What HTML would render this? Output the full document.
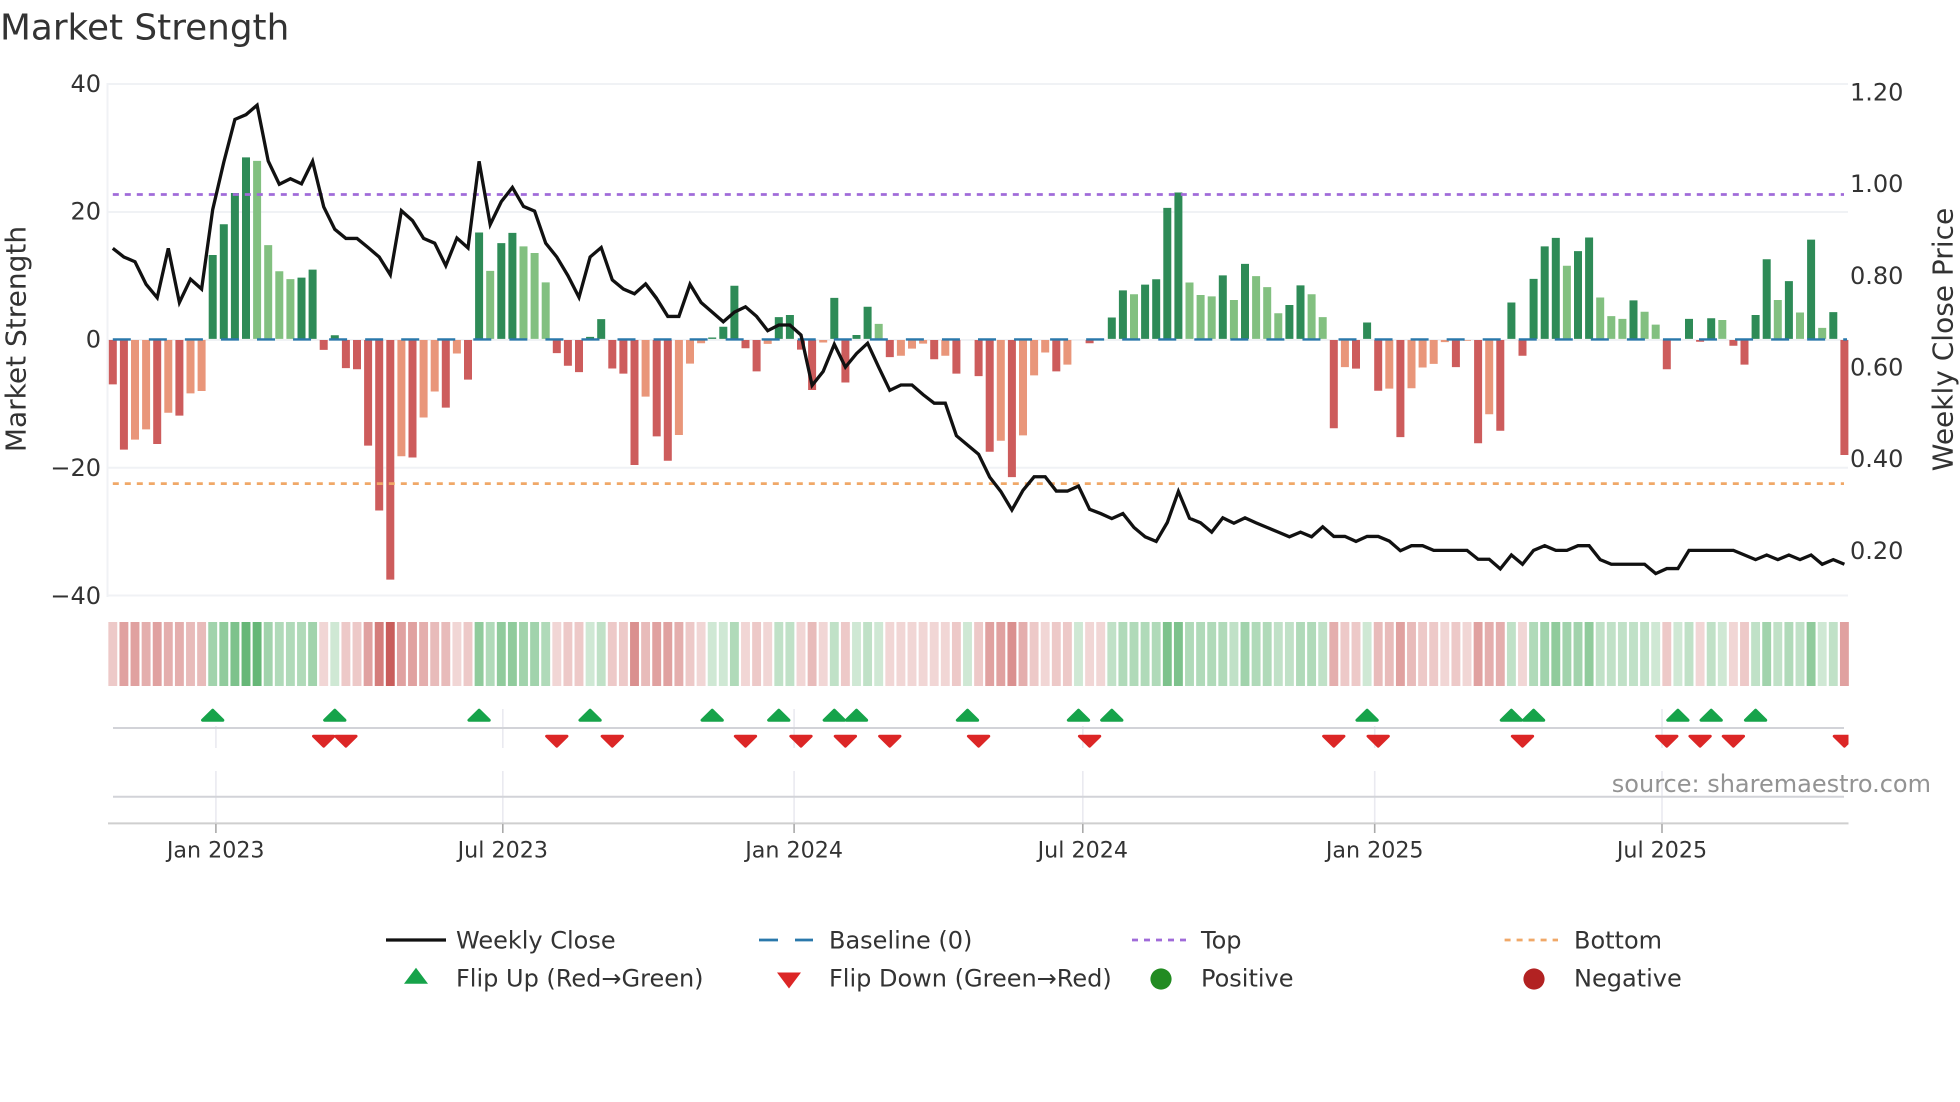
<!DOCTYPE html>
<html><head><meta charset="utf-8"><title>Market Strength</title>
<style>
html,body{margin:0;padding:0;background:#fff}
svg{display:block}
text{font-family:"DejaVu Sans","Liberation Sans",sans-serif;fill:#333}
.b{fill:none;vector-effect:non-scaling-stroke;stroke-width:8}
.h{fill:none;vector-effect:non-scaling-stroke;stroke-width:8.9}
</style></head><body>
<svg xmlns="http://www.w3.org/2000/svg" width="1960" height="1102" viewBox="0 0 1960 1102">
<defs><clipPath id="c"><rect x="100" y="700" width="1748.5" height="60"/></clipPath></defs>
<rect width="1960" height="1102" fill="#fff"/>
<text x="0" y="39.5" font-size="35.8">Market Strength</text>

<!-- grid -->
<g stroke="#f0f2f5" stroke-width="2" fill="none">
<path d="M107 84H1848M107 212H1848M107 340H1848M107 467.7H1848M107 595.5H1848M107.5 83V597"/>
</g>

<!-- bars, first section -->
<g transform="translate(112.8 0) scale(11.1 .3954)">
<path class="b" stroke="#cd5c5c" d="M0 860V972M1 860V1137M4 860V1123M6 860V1051M19 860V885M21 860V931M22 860V934M23 860V1127M24 860V1291M25 860V1466M27 860V1157M30 860V1031M32 860V960M40 860V893M41 860V925M42 860V941M45 860V932M46 860V945M47 860V1176"/>
<path class="b" stroke="#e9967a" d="M2 860V1112M3 860V1086M5 860V1044M7 860V995M8 860V989M26 860V1154M28 860V1056M29 860V990M31 860V894M48 860V1003"/>
<path class="b" stroke="#2e8b57" d="M9 857V645M10 857V567M11 857V488M12 857V398M17 857V702M18 857V682M20 857V848M33 857V588M35 857V615M36 857V589M43 857V852M44 857V807"/>
<path class="b" stroke="#82c080" d="M13 857V407M14 857V620M15 857V686M16 857V706M34 857V685M37 857V623M38 857V640M39 857V714"/>
</g>
<!-- bars, rest -->
<g transform="translate(112.8 60) scale(11.1 .35714)">
<path class="b" stroke="#cd5c5c" d="M49 784V1054M50 784V1122M57 784V807M58 784V872M62 784V811M63 784V924M66 784V903M70 784V832M74 784V838M76 784V878M78 784V885M79 784V1097M81 784V1168M85 784V872M88 784V793M110 784V1031M112 784V864M114 784V926M116 784V1056M121 784V860M123 784V1073M125 784V1038M127 784V828M140 784V866M143 784V789M146 784V800M147 784V853M156 784V1106"/>
<path class="b" stroke="#e9967a" d="M51 784V1050M52 784V850M53 784V793M59 784V795M64 784V791M71 784V828M72 784V808M73 784V794M75 784V828M80 784V1066M82 784V1051M83 784V883M84 784V819M86 784V853M111 784V860M115 784V920M117 784V919M118 784V861M119 784V851M120 784V790M122 784V786M124 784V992"/>
<path class="b" stroke="#2e8b57" d="M54 781V777M55 781V747M56 781V632M60 781V720M61 781V714M65 781V666M67 781V770M68 781V691M90 781V721M91 781V645M93 781V629M94 781V614M95 781V414M96 781V371M100 781V603M102 781V571M106 781V686M107 781V631M113 781V735M126 781V679M128 781V613M129 781V522M130 781V498M132 781V535M133 781V497M137 781V673M142 781V725M144 781V723M148 781V714M149 781V558M151 781V619M153 781V503M155 781V706"/>
<path class="b" stroke="#82c080" d="M69 781V739M92 781V656M97 781V623M98 781V658M99 781V662M101 781V672M103 781V605M104 781V636M105 781V709M108 781V656M109 781V720M131 781V576M134 781V665M135 781V717M136 781V725M138 781V705M139 781V741M145 781V728M150 781V672M152 781V707M154 781V750"/>
</g>

<!-- baseline and refs -->
<path d="M112.8 339.4H1847" stroke="#2a78ab" stroke-width="2.4" stroke-dasharray="18 18.05" fill="none"/>
<path d="M112.8 194.5H1844" stroke="#a06bd9" stroke-width="2.8" stroke-dasharray="6 6" fill="none"/>
<path d="M112.8 483.6H1844" stroke="#f0a868" stroke-width="2.8" stroke-dasharray="6 6" fill="none"/>

<!-- weekly close -->
<g transform="translate(112.8 0) scale(11.1 .3954)">
<polyline fill="none" stroke="#111" stroke-width="3.3" vector-effect="non-scaling-stroke" stroke-linejoin="miter" points="0,628 1,650 2,662 3,719 4,753 5,628 6,765 7,706 8,731 9,530 10,410 11,302 12,290 13,266 14,407 15,466 16,452 17,465 18,408 19,523 20,580 21,603 22,603 23,626 24,650 25,695 26,533 27,558 28,603 29,615 30,672 31,602 32,627 33,408 34,568 35,510 36,474 37,522 38,534 39,615 40,650 41,697 42,752 43,650 44,626 45,708 46,731 47,743 48,718 49,755"/>
</g>
<g transform="translate(112.8 60) scale(11.1 .35714)">
<polyline fill="none" stroke="#111" stroke-width="3.3" vector-effect="non-scaling-stroke" stroke-linejoin="miter" points="48,627 49,668 50,718 51,718 52,628 53,679 54,706 55,733 56,706 57,691 58,718 59,758 60,742 61,742 62,770 63,911 64,872 65,796 66,860 67,822 68,793 69,860 70,925 71,910 72,910 73,937 74,961 75,961 76,1052 77,1078 78,1104 79,1168 80,1208 81,1260 82,1205 83,1167 84,1167 85,1207 86,1207 87,1193 88,1258 89,1270 90,1284 91,1270 92,1309 93,1335 94,1348 95,1295 96,1208 97,1283 98,1296 99,1322 100,1282 101,1297 102,1282 103,1296 104,1309 105,1322 106,1335 107,1322 108,1335 109,1307 110,1334 111,1334 112,1348 113,1334 114,1334 115,1347 116,1374 117,1360 118,1360 119,1373 120,1373 121,1373 122,1373 123,1398 124,1398 125,1425 126,1386 127,1412 128,1373 129,1360 130,1373 131,1373 132,1360 133,1360 134,1399 135,1412 136,1412 137,1412 138,1412 139,1438 140,1424 141,1424 142,1373 143,1373 144,1373 145,1373 146,1373 147,1386 148,1399 149,1386 150,1399 151,1386 152,1399 153,1386 154,1412 155,1399 156,1412"/>
</g>

<!-- heat strip -->
<g transform="translate(112.8 0) scale(11.1 1)">
<g stroke="#c85a58">
<path class="h" stroke-opacity=".25" d="M19 622v64M31 622v64M40 622v64M53 622v64M57 622v64M59 622v64M62 622v64M64 622v64M70 622v64M71 622v64M72 622v64M73 622v64M74 622v64M75 622v64M84 622v64M88 622v64M89 622v64M120 622v64M122 622v64M127 622v64M143 622v64M146 622v64"/>
<path class="h" stroke-opacity=".33" d="M0 622v64M21 622v64M22 622v64M32 622v64M41 622v64M42 622v64M45 622v64M46 622v64M52 622v64M58 622v64M66 622v64M76 622v64M78 622v64M83 622v64M85 622v64M86 622v64M111 622v64M112 622v64M118 622v64M119 622v64M121 622v64M140 622v64M147 622v64"/>
<path class="h" stroke-opacity=".41" d="M7 622v64M8 622v64M29 622v64M30 622v64M48 622v64M63 622v64M114 622v64M115 622v64M117 622v64"/>
<path class="h" stroke-opacity=".49" d="M3 622v64M5 622v64M6 622v64M28 622v64M51 622v64M82 622v64M110 622v64M124 622v64M125 622v64"/>
<path class="h" stroke-opacity=".57" d="M1 622v64M2 622v64M4 622v64M23 622v64M26 622v64M27 622v64M49 622v64M50 622v64M79 622v64M80 622v64M116 622v64M123 622v64M156 622v64"/>
<path class="h" stroke-opacity=".67" d="M47 622v64M81 622v64"/>
<path class="h" stroke-opacity=".79" d="M24 622v64"/>
<path class="h" stroke-opacity=".98" d="M25 622v64"/>
</g>
<g stroke="#40a555">
<path class="h" stroke-opacity=".25" d="M20 622v64M43 622v64M54 622v64M55 622v64M67 622v64M69 622v64M77 622v64M87 622v64M113 622v64M139 622v64M141 622v64M145 622v64M154 622v64"/>
<path class="h" stroke-opacity=".33" d="M44 622v64M60 622v64M61 622v64M65 622v64M68 622v64M90 622v64M101 622v64M105 622v64M106 622v64M109 622v64M126 622v64M134 622v64M135 622v64M136 622v64M137 622v64M138 622v64M142 622v64M144 622v64M148 622v64M150 622v64M152 622v64M155 622v64"/>
<path class="h" stroke-opacity=".41" d="M15 622v64M16 622v64M17 622v64M34 622v64M39 622v64M56 622v64M91 622v64M92 622v64M93 622v64M94 622v64M97 622v64M98 622v64M99 622v64M100 622v64M103 622v64M104 622v64M107 622v64M108 622v64M128 622v64M151 622v64"/>
<path class="h" stroke-opacity=".49" d="M9 622v64M14 622v64M18 622v64M37 622v64M38 622v64M102 622v64M129 622v64M131 622v64M132 622v64M149 622v64"/>
<path class="h" stroke-opacity=".58" d="M10 622v64M33 622v64M35 622v64M36 622v64M130 622v64M133 622v64M153 622v64"/>
<path class="h" stroke-opacity=".68" d="M11 622v64M95 622v64M96 622v64"/>
<path class="h" stroke-opacity=".8" d="M12 622v64M13 622v64"/>
</g>
</g>

<!-- lower panel lines -->
<g fill="none">
<path stroke="#eaeaf0" stroke-width="1.6" d="M215.9 726V748M215.9 771V823M502.8 709V748M502.8 771V823M794.1 709V748M794.1 771V823M1082.8 726V748M1082.8 771V823M1374.7 726V748M1374.7 771V823M1662 709V748M1662 771V823"/>
<path stroke="#d2d3d8" stroke-width="2" d="M113 728H1844M113 796.8H1844"/>
<path stroke="#cfcfcf" stroke-width="2" d="M108 823.4H1848.5"/>
<path stroke="#aaa" stroke-width="1.6" d="M215.9 824V833M502.8 824V833M794.1 824V833M1082.8 824V833M1374.7 824V833M1662 824V833"/>
</g>

<!-- flip markers -->
<path fill="#16a34a" stroke="#16a34a" stroke-width="3" stroke-linejoin="round" d="M212.7 710.2l-10.15 10h20.3zM334.8 710.2l-10.15 10h20.3zM479.1 710.2l-10.15 10h20.3zM590.1 710.2l-10.15 10h20.3zM712.2 710.2l-10.15 10h20.3zM778.8 710.2l-10.15 10h20.3zM834.3 710.2l-10.15 10h20.3zM856.5 710.2l-10.15 10h20.3zM967.5 710.2l-10.15 10h20.3zM1078.5 710.2l-10.15 10h20.3zM1111.8 710.2l-10.15 10h20.3zM1367.1 710.2l-10.15 10h20.3zM1511.4 710.2l-10.15 10h20.3zM1533.6 710.2l-10.15 10h20.3zM1677.9 710.2l-10.15 10h20.3zM1711.2 710.2l-10.15 10h20.3zM1755.6 710.2l-10.15 10h20.3z"/>
<g clip-path="url(#c)">
<path fill="#dc2626" stroke="#dc2626" stroke-width="3" stroke-linejoin="round" d="M323.7 746.2l-10.15-10h20.3zM345.9 746.2l-10.15-10h20.3zM556.8 746.2l-10.15-10h20.3zM612.3 746.2l-10.15-10h20.3zM745.5 746.2l-10.15-10h20.3zM801 746.2l-10.15-10h20.3zM845.4 746.2l-10.15-10h20.3zM889.8 746.2l-10.15-10h20.3zM978.6 746.2l-10.15-10h20.3zM1089.6 746.2l-10.15-10h20.3zM1333.8 746.2l-10.15-10h20.3zM1378.2 746.2l-10.15-10h20.3zM1522.5 746.2l-10.15-10h20.3zM1666.8 746.2l-10.15-10h20.3zM1700.1 746.2l-10.15-10h20.3zM1733.4 746.2l-10.15-10h20.3zM1844.4 746.2l-10.15-10h20.3z"/>
</g>

<!-- axis labels -->
<g font-size="24" text-anchor="end">
<text x="101" y="91.8">40</text>
<text x="101" y="219.7">20</text>
<text x="101" y="347.6">0</text>
<text x="101" y="476">−20</text>
<text x="101" y="604">−40</text>
</g>
<g font-size="24">
<text x="1850" y="100.5">1.20</text>
<text x="1850" y="192">1.00</text>
<text x="1850" y="284">0.80</text>
<text x="1850" y="375.5">0.60</text>
<text x="1850" y="467">0.40</text>
<text x="1850" y="559">0.20</text>
</g>
<text transform="translate(25.5 339) rotate(-90)" font-size="28" text-anchor="middle">Market Strength</text>
<text transform="translate(1952.5 339.5) rotate(-90)" font-size="28" text-anchor="middle">Weekly Close Price</text>

<g font-size="22.2" text-anchor="middle">
<text x="215.7" y="857.6">Jan 2023</text>
<text x="502.8" y="857.6">Jul 2023</text>
<text x="794.1" y="857.6">Jan 2024</text>
<text x="1082.8" y="857.6">Jul 2024</text>
<text x="1374.7" y="857.6">Jan 2025</text>
<text x="1662" y="857.6">Jul 2025</text>
</g>
<text x="1931" y="792" font-size="24" text-anchor="end" style="fill:#939393">source: sharemaestro.com</text>

<!-- legend -->
<path d="M386 940H446" stroke="#111" stroke-width="3.3" fill="none"/>
<path d="M759 940H778M795 940H813" stroke="#2a78ab" stroke-width="2.8" fill="none"/>
<path d="M1132 940H1186" stroke="#a06bd9" stroke-width="2.8" stroke-dasharray="6 6" fill="none"/>
<path d="M1504.6 940H1558" stroke="#f0a868" stroke-width="2.8" stroke-dasharray="6 6" fill="none"/>
<path d="M416 967.7l-12 16h24z" fill="#16a34a"/>
<path d="M789 988.5l-12-16h24z" fill="#dc2626"/>
<circle cx="1161" cy="979" r="10.6" fill="#228b22"/>
<circle cx="1534" cy="979" r="10.6" fill="#b22222"/>
<g font-size="24">
<text x="456" y="948.3">Weekly Close</text>
<text x="829" y="948.3">Baseline (0)</text>
<text x="1201" y="948.3">Top</text>
<text x="1574" y="948.3">Bottom</text>
<text x="456" y="986.6">Flip Up (Red→Green)</text>
<text x="829" y="986.6">Flip Down (Green→Red)</text>
<text x="1201" y="986.6">Positive</text>
<text x="1574" y="986.6">Negative</text>
</g>
</svg>
</body></html>
